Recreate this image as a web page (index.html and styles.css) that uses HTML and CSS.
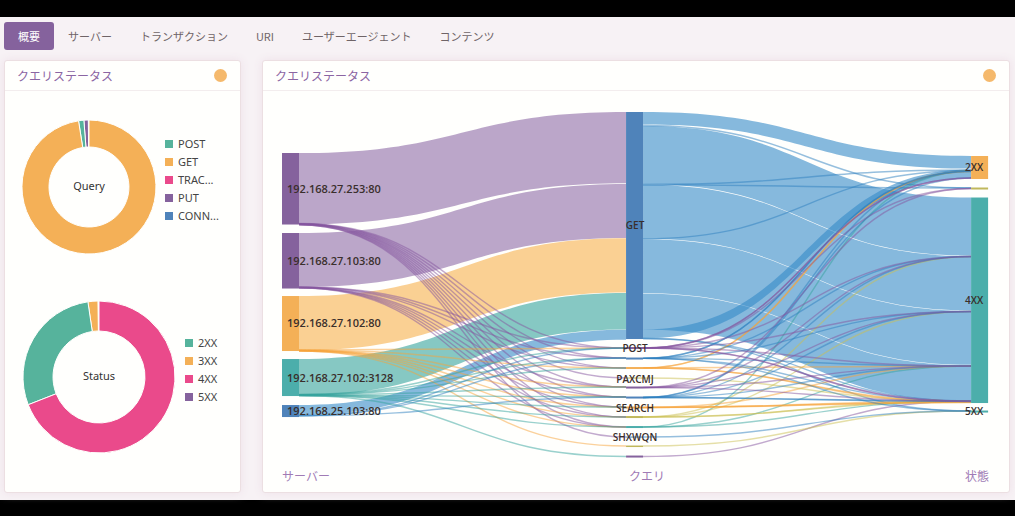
FILE: index.html
```html
<!DOCTYPE html>
<html lang="ja">
<head>
<meta charset="utf-8">
<meta name="viewport" content="width=device-width, initial-scale=1">
<title>概要</title>
<link rel="stylesheet" href="styles.css">
</head>
<body>
<div class="page">
  <nav class="tabs">
    <button class="tab tab-active" type="button" aria-current="page">概要</button>
    <button class="tab" type="button">サーバー</button>
    <button class="tab" type="button">トランザクション</button>
    <button class="tab" type="button">URI</button>
    <button class="tab" type="button">ユーザーエージェント</button>
    <button class="tab" type="button">コンテンツ</button>
  </nav>
  <main class="cards">
    <section class="card">
      <header class="card-head"><h2 class="card-title">クエリステータス</h2><span class="dot"></span></header>
      <div class="donuts">
        <div class="donut-row">
          <svg class="donut donut-small" id="query-donut" viewBox="-67 -67 134 134"><text class="donut-label" y="3">Query</text></svg>
          <ul class="legend">
            <li class="legend-item"><span class="swatch green"></span>POST</li>
            <li class="legend-item"><span class="swatch orange"></span>GET</li>
            <li class="legend-item"><span class="swatch pink"></span>TRAC...</li>
            <li class="legend-item"><span class="swatch purple"></span>PUT</li>
            <li class="legend-item"><span class="swatch blue"></span>CONN...</li>
          </ul>
        </div>
        <div class="donut-row">
          <svg class="donut donut-large" id="status-donut" viewBox="-76 -76 152 152"><text class="donut-label" y="3">Status</text></svg>
          <ul class="legend">
            <li class="legend-item"><span class="swatch green"></span>2XX</li>
            <li class="legend-item"><span class="swatch orange"></span>3XX</li>
            <li class="legend-item"><span class="swatch pink"></span>4XX</li>
            <li class="legend-item"><span class="swatch purple"></span>5XX</li>
          </ul>
        </div>
      </div>
    </section>
    <section class="card">
      <header class="card-head"><h2 class="card-title">クエリステータス</h2><span class="dot"></span></header>
      <svg class="sankey" viewBox="263 91 746 401">
        <g id="links"></g>
        <g id="nodes"></g>
        <g class="node-label">
          <text x="287" y="193">192.168.27.253:80</text>
          <text x="287" y="265">192.168.27.103:80</text>
          <text x="287" y="327">192.168.27.102:80</text>
          <text x="287" y="382">192.168.27.102:3128</text>
          <text x="287" y="415">192.168.25.103:80</text>
        </g>
        <g class="node-label centered">
          <text x="635" y="229">GET</text>
          <text x="635" y="352">POST</text>
          <text x="635" y="383">PAXCMJ</text>
          <text x="635" y="412">SEARCH</text>
          <text x="635" y="441">SHXWQN</text>
          <text x="974" y="171">2XX</text>
          <text x="974" y="304">4XX</text>
          <text x="974" y="415">5XX</text>
        </g>
        <g class="axis-label">
          <text x="282" y="481">サーバー</text>
          <text x="629" y="481">クエリ</text>
          <text x="965" y="481">状態</text>
        </g>
      </svg>
    </section>
  </main>
</div>
<script src="charts.js"></script>
</body>
</html>
```
FILE: styles.css
```css
* { box-sizing: border-box; }

body {
  margin: 0;
  min-height: 100vh;
  padding: 17px 0 16px;
  display: flex;
  flex-direction: column;
  background: #000;
  font-family: "Noto Sans", "Noto Sans CJK JP", sans-serif;
}

.page {
  flex: 1;
  padding: 5px 5px 7px 4px;
  background: #f7f2f5;
}

.tabs { display: flex; margin-bottom: 10px; }

.tab {
  height: 28px;
  padding: 0 14px;
  border: 0;
  border-radius: 3px;
  background: none;
  color: #6f6467;
  font: 11px "Noto Sans CJK JP", sans-serif;
  white-space: nowrap;
}
.tab-active { background: #85629d; color: #fff; }

.cards {
  display: grid;
  grid-template-columns: minmax(0, 19fr) minmax(0, 60fr);
  gap: 21px;
}

.card {
  border: 1px solid #ecdfe2;
  border-radius: 3px;
  background: #fffffd;
  box-shadow: 0 0 10px #eee0e8;
}

.card-head {
  display: flex;
  align-items: center;
  justify-content: space-between;
  height: 30px;
  padding: 0 13px 0 12px;
  border-bottom: 1px solid #f3edee;
}

.card-title {
  margin: 0;
  color: #8b65a3;
  font: 12px "Noto Sans CJK JP", sans-serif;
}

.dot {
  width: 13px;
  height: 13px;
  border-radius: 50%;
  background: #f5b96c;
}

.donuts {
  display: flex;
  flex-direction: column;
  gap: 47px;
  padding: 29px 0 0 17px;
}

.donut-row { display: flex; align-items: center; gap: 9px; }
.donut { flex: none; }
.donut-small { width: 134px; }
.donut-large { width: 152px; margin: 0 1px; }
.donut path { stroke: #fffffd; stroke-width: 1px; }
.donut-label { fill: #333; font-size: 11px; text-anchor: middle; }

.legend {
  margin: 0;
  padding: 0 0 15px;
  list-style: none;
  color: #444;
  font-size: 11px;
  line-height: 18px;
}
.legend-item { display: flex; align-items: center; gap: 5px; white-space: nowrap; }
.swatch { width: 8px; height: 8px; }

.green { background: #56b39c; fill: #56b39c; }
.orange { background: #f4b057; fill: #f4b057; }
.pink { background: #ea4a8b; fill: #ea4a8b; }
.purple { background: #85629d; fill: #85629d; }
.blue { background: #4f83ba; fill: #4f83ba; }
.teal { fill: #4caeab; }
.olive { fill: #c0b85c; }

.sankey { display: block; width: 100%; }
.link { fill: none; stroke-opacity: .5; }
.link-purple { stroke: #85569f; }
.link-orange { stroke: #f7a43a; }
.link-teal { stroke: #35a39d; }
.link-blue { stroke: #2e7fc0; }
.link-olive { stroke: #cbc052; }

.ribbon { fill-opacity: .6; }
.ribbon-purple { fill: #8e6ba7; }
.ribbon-orange { fill: #f7b14d; }
.ribbon-teal { fill: #35a39d; }
.ribbon-blue { fill: #368bc8; }

.node-label { fill: #3a2f2c; font: 600 11px "Open Sans", sans-serif; }
.centered { text-anchor: middle; font-size: 10px; }
.axis-label { fill: #a07bb5; font: 12px "Noto Sans CJK JP", sans-serif; }
```
FILE: charts.js
```js
const NS = "http://www.w3.org/2000/svg";

function shape(tag, attrs) {
  const el = document.createElementNS(NS, tag);
  for (const key in attrs) el.setAttribute(key, attrs[key]);
  return el;
}

// slices: [start angle, end angle, colour], clockwise degrees from the top
function donut(id, outer, inner, slices) {
  const svg = document.getElementById(id);
  const at = (r, deg) => {
    const a = deg * Math.PI / 180;
    return (r * Math.sin(a)).toFixed(2) + " " + (-r * Math.cos(a)).toFixed(2);
  };
  slices.forEach(([from, to, colour]) => {
    const large = to - from > 180 ? 1 : 0;
    svg.prepend(shape("path", {
      class: colour,
      d: `M${at(outer, from)}A${outer} ${outer} 0 ${large} 1 ${at(outer, to)}` +
         `L${at(inner, to)}A${inner} ${inner} 0 ${large} 0 ${at(inner, from)}Z`
    }));
  });
}

donut("query-donut", 67, 40, [
  [0, 351, "orange"], [351, 355.6, "green"], [355.6, 359.4, "purple"]
]);
donut("status-donut", 76, 46, [
  [0, 248.6, "pink"], [248.6, 351.6, "green"], [351.6, 359.2, "orange"]
]);

const links = document.getElementById("links");
const nodes = document.getElementById("nodes");
const LEFT = [299, 626];
const RIGHT = [643, 971];

function link([x0, x1], y0, y1, colour) {
  const mid = (x0 + x1) / 2;
  links.append(shape("path", {
    class: "link link-" + colour,
    "stroke-width": 1.4,
    d: `M${x0} ${y0}C${mid} ${y0} ${mid} ${y1} ${x1} ${y1}`
  }));
}

// y0 and y1 are the top edges at both ends
function ribbon([x0, x1], y0, y1, height, colour) {
  const mid = (x0 + x1) / 2;
  const b0 = y0 + height;
  const b1 = y1 + height;
  links.append(shape("path", {
    class: "ribbon ribbon-" + colour,
    d: `M${x0} ${y0}C${mid} ${y0} ${mid} ${y1} ${x1} ${y1}` +
       `V${b1}C${mid} ${b1} ${mid} ${b0} ${x0} ${b0}Z`
  }));
}

// Server to GET
ribbon(LEFT, 153, 112, 71.3, "purple");
ribbon(LEFT, 233, 184, 54, "purple");
ribbon(LEFT, 296, 238.3, 54.3, "orange");
ribbon(LEFT, 359, 293, 36.5, "teal");
ribbon(LEFT, 405, 329.8, 10, "blue");

// Server to the rare methods
[
  [223.5, "purple", [348, 358, 368, 378, 387, 397, 407, 417, 427, 437]],
  [287, "purple", [348, 358, 368, 387, 397, 407, 417, 427]],
  [350, "orange", [348, 368, 387, 397, 407, 417, 427, 446]],
  [394.5, "teal", [348, 358, 368, 387, 397, 407, 417, 427, 456.5]],
  [415.5, "blue", [348, 358, 397]]
].forEach(([y, colour, targets]) => {
  targets.forEach((target, i) => link(LEFT, y + i * 0.15, target, colour));
});

// GET to status
ribbon(RIGHT, 112, 156, 12.6, "blue");
ribbon(RIGHT, 126, 197.5, 58, "blue");
ribbon(RIGHT, 184.7, 256.2, 54, "blue");
ribbon(RIGHT, 239.3, 310.8, 54, "blue");
ribbon(RIGHT, 293.8, 365.3, 36, "blue");
ribbon(RIGHT, 329.5, 169.5, 9, "blue");
link(RIGHT, 125.5, 188, "blue");
link(RIGHT, 184.5, 170, "blue");
link(RIGHT, 184.9, 188, "blue");
link(RIGHT, 238.7, 170.5, "blue");
link(RIGHT, 338.5, 411, "blue");
link(RIGHT, 338.5, 401, "blue");

// Rare methods to status
[
  [456.5, "purple", [401]],
  [446, "olive", [411]],
  [437, "blue", [411]],
  [427, "teal", [171, 366, 401]],
  [417, "olive", [256.5, 311.5, 401, 402]],
  [407.5, "orange", [366, 401, 402, 402.5]],
  [378, "olive", [401]],
  [368, "orange", [171, 171.5, 366, 401, 402]],
  [397.5, "blue", [171, 178, 256.5, 311.5, 366, 401, 401.5]],
  [387.5, "purple", [188.5, 256.5, 311.5, 366, 401]],
  [358.3, "blue", [171, 171.5, 256.5, 311.5, 366, 401, 411]],
  [348, "purple", [178, 178, 188.5, 256.5, 311.5, 366, 401, 401.5]]
].forEach(([y, colour, targets]) => {
  targets.forEach(target => link(RIGHT, y, target, colour));
});

// Nodes: x, y, height, colour
[
  [282, 153, 71.5, "purple"], [282, 233, 55.5, "purple"], [282, 296, 55, "orange"],
  [282, 359, 37, "teal"], [282, 405, 12, "blue"],
  [626, 112, 227, "blue"], [626, 347, 2, "purple"], [626, 357.5, 2, "blue"],
  [626, 367, 2, "orange"], [626, 377.5, 1, "olive"], [626, 386.5, 2, "purple"],
  [626, 396.5, 2, "blue"], [626, 406.5, 2, "orange"], [626, 416, 2, "olive"],
  [626, 426, 2, "teal"], [626, 436.5, 1, "blue"], [626, 445.5, 1.5, "olive"],
  [626, 455.5, 2, "purple"],
  [971, 156, 23, "orange"], [971, 187.5, 2, "olive"], [971, 197.5, 205.5, "teal"],
  [971, 410.5, 2, "teal"]
].forEach(([x, y, height, colour]) => {
  nodes.append(shape("rect", { x, y, width: 17, height, class: colour }));
});
```
